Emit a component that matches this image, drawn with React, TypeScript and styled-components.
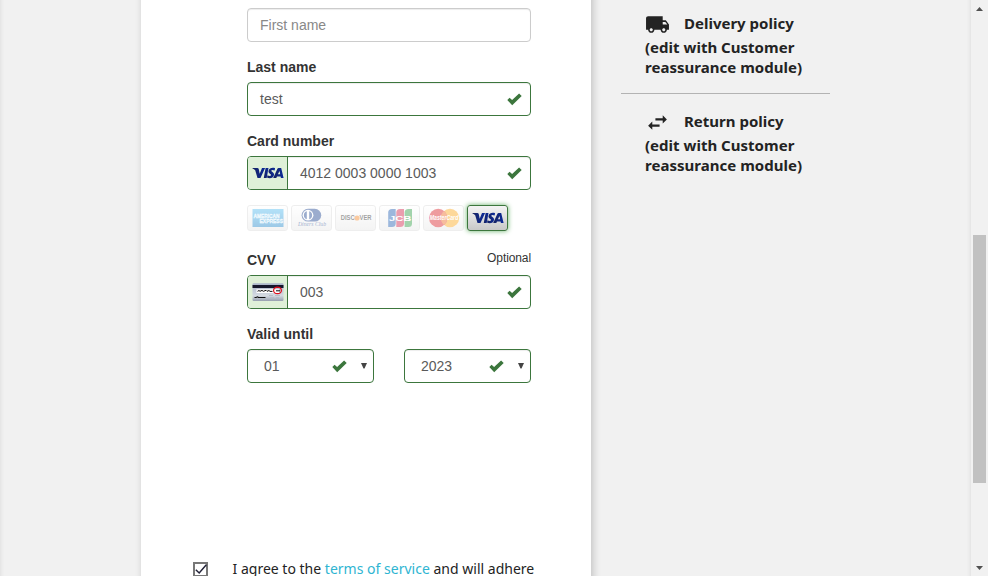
import React from "react";
import styled, { createGlobalStyle } from "styled-components";

const Global = createGlobalStyle`
  * { box-sizing: border-box; }
  body { margin: 0; overflow: hidden; background: #f1f1f1; }
`;

const sans = `"Liberation Sans", Arial, sans-serif`;
const noto = `"Noto Sans", sans-serif`;
const green = "#3c763d";

const Page = styled.div`
  display: flex;
  width: 988px;
  height: 576px;
  overflow: hidden;
  background: #f1f1f1;
`;
const Wrapper = styled.main`
  display: flex;
  width: 971px;
  height: 640px;
  margin-top: -30px;
  padding: 0 0 0 141px;
  background: #f1f1f1;
  box-shadow: inset 0 2px 5px 0 rgba(0, 0, 0, 0.11);
`;
const Card = styled.section`
  width: 450px;
  height: 640px;
  padding: 38px 0 0;
  background: #fff;
  box-shadow: 2px 2px 8px 0 rgba(0, 0, 0, 0.2);
`;
const Form = styled.form`
  width: 284px;
  height: 551px;
  margin-left: 106px;
  font: 14px/20px ${sans};
  color: #333;
`;
const Field = styled.div`
  margin-bottom: 15px;
`;
const LabelRow = styled.div`
  display: flex;
  justify-content: space-between;
  height: 25px;
`;
const Label = styled.label`
  font-weight: 700;
`;
const Optional = styled.span`
  font-size: 12px;
  line-height: 16px;
  letter-spacing: -0.1px;
`;
const Control = styled.div<{ $valid?: boolean }>`
  display: flex;
  align-items: center;
  height: 34px;
  border: 1px solid ${(p) => (p.$valid ? green : "#ccc")};
  border-radius: 4px;
  background: #fff;
  box-shadow: inset 0 1px 1px rgba(0, 0, 0, 0.075);
  overflow: hidden;
`;
const Value = styled.span<{ $placeholder?: boolean; $indent?: number }>`
  flex: 1;
  padding-left: ${(p) => p.$indent ?? 12}px;
  color: ${(p) => (p.$placeholder ? "#888" : "#5a5a5a")};
`;
const Addon = styled.span`
  display: flex;
  align-items: center;
  justify-content: center;
  width: 40px;
  height: 32px;
  border-right: 1px solid ${green};
  background: #dff0d8;
`;
const CheckIcon = styled.svg<{ $right?: number }>`
  width: 15px;
  height: 13px;
  margin: 1px ${(p) => p.$right ?? 8}px 0 0;
  fill: ${green};
`;
const Arrow = styled.svg`
  width: 6px;
  height: 7px;
  margin: 0 6px 1px 0;
  fill: #444;
`;
const Selects = styled.div`
  display: grid;
  grid-template-columns: 127px 127px;
  gap: 30px;
`;
const Brands = styled.div`
  display: flex;
  gap: 3px;
  height: 26px;
  margin: 15px 0 19px;
`;
const Brand = styled.span<{ $active?: boolean }>`
  display: flex;
  align-items: center;
  justify-content: center;
  width: 41px;
  height: 26px;
  border: 1px solid ${(p) => (p.$active ? green : "#d8d8d8")};
  border-radius: 3px;
  background: ${(p) => (p.$active ? "linear-gradient(#f4f4f4, #c8c8c8)" : "linear-gradient(#fff, #e6e6e6)")};
  opacity: ${(p) => (p.$active ? 1 : 0.42)};
  box-shadow: ${(p) => (p.$active ? "0 0 5px #67b168" : "none")};
`;
const Art = styled.svg`
  display: block;
  flex: none;
  width: 32px;
  height: 20px;
  overflow: visible;
`;

const Check = ({ right }: { right?: number }) => (
  <CheckIcon viewBox="0 0 15 13" $right={right}>
    <path d="M0.3 7.1 2.6 4.8 5.1 6.9 12.1 0.6 14.7 3 5.2 12.3Z" />
  </CheckIcon>
);
const Caret = () => (
  <Arrow viewBox="0 0 6 7"><path d="M0 1H6L3.5 6.5H2.5Z" /></Arrow>
);

const Visa = () => (
  <Art viewBox="0 0 32 20">
    <defs>
      <linearGradient id="visaBlue" x1="0" x2="1">
        <stop offset="0" stopColor="#17225f" />
        <stop offset="1" stopColor="#0a2a9c" />
      </linearGradient>
    </defs>
    <g fill="url(#visaBlue)">
      <path d="M0.5 5H5.4Q6.5 5 6.8 6.2L7.7 10.7 10 5H13.1L8.5 15H5.5L3.2 7.2Q2.2 6 0.5 5.4Z" />
      <path d="M13.6 5H16.5L14.7 15H11.8Z" />
      <path d="M23.1 5.2 22.6 7.6Q19.7 6.3 19.3 7.8C19.2 8.8 22.4 9.3 22 12 21.4 15.5 17.4 15.6 15 14.6L15.5 12.2C17 13.1 19 13.2 19.1 12 19.2 11 16.1 10.4 16.5 8 17 4.8 20.8 4.3 23.1 5.2Z" />
      <path fillRule="evenodd" d="M26.6 5H29.2L31.6 15H28.9L28.6 13.5H25L24.3 15H21.2L25.3 6Q25.8 5 26.6 5ZM27.5 7.9 25.9 11.3H28.2Z" />
    </g>
  </Art>
);
const Amex = () => (
  <Art viewBox="0 0 32 20">
    <defs>
      <linearGradient id="amexBlue" x2="0" y2="1">
        <stop stopColor="#4cbaf0" />
        <stop offset="1" stopColor="#1780c6" />
      </linearGradient>
    </defs>
    <path d="M0.5 1H31.5V19H0.5Z" fill="url(#amexBlue)" />
    <g fill="#b9e2fa" stroke="#fff" strokeWidth="0.3" fontFamily={sans} fontWeight="700" fontSize="6">
      <text x="1.5" y="9.7" textLength="26" lengthAdjust="spacingAndGlyphs">AMERICAN</text>
      <text x="7.5" y="14.9" textLength="23.5" lengthAdjust="spacingAndGlyphs">EXPRESS</text>
    </g>
  </Art>
);
const Diners = () => (
  <Art viewBox="0 0 32 20">
    <path d="M12 0.8H18.8A6.4 6.4 0 0 1 18.8 13.6H12A6.4 6.4 0 0 1 12 0.8Z" fill="#123b8b" />
    <circle cx="12" cy="7.2" r="5.4" fill="#fff" />
    <path d="M10.8 3.2A4.2 4.2 0 0 0 10.8 11.2ZM13.2 3.2A4.2 4.2 0 0 1 13.2 11.2Z" fill="#123b8b" />
    <text x="2" y="18.4" textLength="28" lengthAdjust="spacingAndGlyphs" fontFamily="Liberation Serif, serif" fontStyle="italic" fontSize="7" fill="#123b8b">Diners Club</text>
  </Art>
);
const Discover = () => (
  <Art viewBox="0 0 32 20">
    <g fontFamily={sans} fontWeight="700" fontSize="6.8" fill="#222">
      <text x="0.7" y="12.4" textLength="14" lengthAdjust="spacingAndGlyphs">DISC</text>
      <text x="19.5" y="12.4" textLength="12" lengthAdjust="spacingAndGlyphs">VER</text>
    </g>
    <circle cx="17" cy="10" r="2.6" fill="#f58220" />
  </Art>
);
const Jcb = () => (
  <Art viewBox="0 0 32 20">
    <path d="M8 1H11.7V15.5Q11.7 19 8 19H4.2V4.5Q4.2 1 8 1Z" fill="#1556ae" />
    <path d="M16 1H20V15.5Q20 19 16 19H12.3V4.5Q12.3 1 16 1Z" fill="#cf183f" />
    <path d="M24.5 1H28V15.5Q28 19 24.5 19H20.6V4.5Q20.6 1 24.5 1Z" fill="#24983b" />
    <text x="5" y="12.6" textLength="22.5" lengthAdjust="spacingAndGlyphs" fontFamily={sans} fontSize="7.3" fontWeight="700" fill="#fff">JCB</text>
  </Art>
);
const MasterCard = () => (
  <Art viewBox="0 0 32 20">
    <circle cx="22" cy="10" r="9.2" fill="#fca311" />
    <circle cx="10.2" cy="10" r="9.2" fill="#d9151d" />
    <path d="M16 3A9.2 9.2 0 0 1 16 17A9.2 9.2 0 0 1 16 3Z" fill="#ed6419" />
    <text x="1.8" y="12.2" textLength="28.5" lengthAdjust="spacingAndGlyphs" fontFamily={sans} fontSize="6.4" fontStyle="italic" fontWeight="700" fill="#fff">MasterCard</text>
  </Art>
);
const CardBack = () => (
  <Art viewBox="0 0 32 20">
    <defs>
      <linearGradient id="cardBack" x2="0" y2="1">
        <stop stopColor="#aab4ca" />
        <stop offset="0.7" stopColor="#d5dbe2" />
        <stop offset="1" stopColor="#969faf" />
      </linearGradient>
    </defs>
    <rect x="0.5" y="1.2" width="31" height="17.8" rx="1.2" fill="url(#cardBack)" />
    <path d="M0.5 3H31.5V6H0.5Z" fill="#16182d" />
    <path d="M4.5 7.2H27V11H4.5Z" fill="#fff" />
    <path d="M5.5 9.3 7 8.5 8 9.3 10 8.4 11.4 9.3 14 8.3 15 9.3 17 8.5 18 9.4H20.5M24 8.8H28" fill="none" stroke="#111" strokeWidth="1" />
    <path d="M2.5 15.5H4L5.5 14.8 6.5 15.5H13.5" fill="none" stroke="#111" strokeWidth="1.1" />
    <path d="M17 13.5H21M23 13.5H28M18 15.8H22M24 15.8H27" stroke="#aeb6c2" strokeWidth="0.8" />
    <ellipse cx="25.5" cy="8.4" rx="3.9" ry="3.3" fill="none" stroke="#e30b1a" strokeWidth="1.2" />
  </Art>
);

const Agreement = styled.div`
  display: flex;
  align-items: flex-start;
  margin-left: 52px;
  font: 14px/20px ${noto};
  color: #232323;
  white-space: nowrap;
`;
const CheckBox = styled.span`
  width: 15px;
  height: 15px;
  margin: 3px 24.5px 0 0;
  border: 2px solid #777;
`;
const Tick = styled.svg`
  display: block;
  width: 11px;
  height: 11px;
  overflow: visible;
`;
const TermsText = styled.span`
  letter-spacing: 0.01px;
`;
const TermsLink = styled.a`
  color: #2fb5d2;
`;
const Aside = styled.aside`
  width: 209px;
  margin: 30px 0 0 30px;
  font: 700 15px/20px ${noto};
  color: #232323;
`;
const Policy = styled.div<{ $line?: boolean }>`
  height: ${(p) => (p.$line ? 94 : 100)}px;
  padding: ${(p) => (p.$line ? 12 : 16)}px 0 0 24px;
  border-bottom: ${(p) => (p.$line ? "1px solid #b3b3b3" : "0")};
  white-space: nowrap;
`;
const PolicyHead = styled.div`
  display: flex;
  align-items: flex-start;
  height: 25px;
  gap: 14px;
  line-height: 22px;
`;
const PolicyIcon = styled.svg`
  width: 25px;
  height: 25px;
  fill: #232323;
`;
const PolicyLine = styled.div`
  letter-spacing: 0.02px;
`;
const ScrollBar = styled.div`
  display: flex;
  flex-direction: column;
  align-items: center;
  width: 17px;
  height: 576px;
  background: #f1f1f1;
`;
const ScrollArrow = styled.svg`
  width: 7px;
  height: 4px;
  margin: 7px 0 6px;
  fill: #505050;
`;
const Track = styled.div`
  display: flex;
  justify-content: center;
  flex: 1;
  width: 17px;
  padding-top: 218px;
`;
const Thumb = styled.div`
  width: 13px;
  height: 248px;
  background: #c1c1c1;
`;

export default function App() {
  return (
    <Page>
      <Global />
      <Wrapper>
        <Card>
          <Form>
            <Field><Control><Value $placeholder>First name</Value></Control></Field>
            <Field>
              <LabelRow><Label>Last name</Label></LabelRow>
              <Control $valid><Value>test</Value><Check /></Control>
            </Field>
            <Field>
              <LabelRow><Label>Card number</Label></LabelRow>
              <Control $valid>
                <Addon><Visa /></Addon>
                <Value>4012 0003 0000 1003</Value><Check />
              </Control>
              <Brands>
                <Brand><Amex /></Brand>
                <Brand><Diners /></Brand>
                <Brand><Discover /></Brand>
                <Brand><Jcb /></Brand>
                <Brand><MasterCard /></Brand>
                <Brand $active><Visa /></Brand>
              </Brands>
              <LabelRow><Label>CVV</Label><Optional>Optional</Optional></LabelRow>
              <Control $valid>
                <Addon><CardBack /></Addon>
                <Value>003</Value><Check />
              </Control>
            </Field>
            <Field>
              <LabelRow><Label>Valid until</Label></LabelRow>
              <Selects>
                <Control $valid><Value $indent={16}>01</Value><Check right={14} /><Caret /></Control>
                <Control $valid><Value $indent={16}>2023</Value><Check right={14} /><Caret /></Control>
              </Selects>
            </Field>
          </Form>
          <Agreement>
            <CheckBox>
              <Tick viewBox="0 0 11 11"><path d="M0.8 5.7 4.2 9 11.3 0.8" fill="none" stroke="#232338" strokeWidth="1.5" /></Tick>
            </CheckBox>
            <TermsText>I agree to the <TermsLink>terms of service</TermsLink> and will adhere</TermsText>
          </Agreement>
        </Card>
        <Aside>
          <Policy $line>
            <PolicyHead>
              <PolicyIcon viewBox="0 0 24 24"><path d="M20 8h-3V4H3c-1.1 0-2 .9-2 2v11h2c0 1.66 1.34 3 3 3s3-1.34 3-3h6c0 1.66 1.34 3 3 3s3-1.34 3-3h2v-5l-3-4zM6 18.5c-.83 0-1.5-.67-1.5-1.5s.67-1.5 1.5-1.5 1.5.67 1.5 1.5-.67 1.5-1.5 1.5zm13.5-9l1.96 2.5H17V9.5h2.5zM18 18.5c-.83 0-1.5-.67-1.5-1.5s.67-1.5 1.5-1.5 1.5.67 1.5 1.5-.67 1.5-1.5 1.5z" /></PolicyIcon>
              Delivery policy
            </PolicyHead>
            <PolicyLine>(edit with Customer</PolicyLine>
            <PolicyLine>reassurance module)</PolicyLine>
          </Policy>
          <Policy>
            <PolicyHead>
              <PolicyIcon viewBox="0 0 24 24"><path d="M6.99 11L3 15l3.99 4v-3H14v-2H6.99v-3zM21 9l-3.99-4v3H10v2h7.01v3L21 9z" /></PolicyIcon>
              Return policy
            </PolicyHead>
            <PolicyLine>(edit with Customer</PolicyLine>
            <PolicyLine>reassurance module)</PolicyLine>
          </Policy>
        </Aside>
      </Wrapper>
      <ScrollBar>
        <ScrollArrow viewBox="0 0 7 4"><path d="M0 4 3.5 0 7 4Z" /></ScrollArrow>
        <Track><Thumb /></Track>
        <ScrollArrow viewBox="0 0 7 4"><path d="M0 0H7L3.5 4Z" /></ScrollArrow>
      </ScrollBar>
    </Page>
  );
}
